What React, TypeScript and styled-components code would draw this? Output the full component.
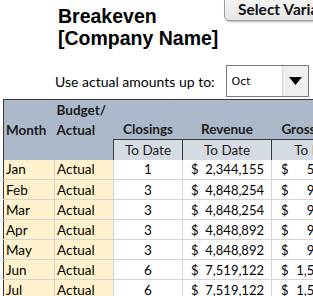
import styled, { createGlobalStyle } from "styled-components";

const GlobalStyle = createGlobalStyle`
  html, body {
    margin: 0;
    padding: 0;
    background: #ffffff;
  }
  body {
    font-family: Lato, "Open Sans", sans-serif;
    color: #000;
  }
`;

const Page = styled.div`
  width: 313px;
  height: 296px;
  overflow: hidden;
  background: #ffffff;
`;

const Top = styled.div`
  height: 99px;
  display: flex;
  flex-direction: column;
`;

const TitleRow = styled.div`
  display: flex;
  align-items: flex-start;
  gap: 10px;
  padding-left: 58px;
  height: 60px;
`;

const Title = styled.h1`
  width: 156px;
  flex-shrink: 0;
  margin: 5px 0 0;
  font-family: "Liberation Sans", Arial, sans-serif;
  font-weight: bold;
  font-size: 19.5px;
  line-height: 22px;
  color: #000;
  white-space: nowrap;
`;

const MacroButton = styled.button`
  flex-shrink: 0;
  margin-top: -6px;
  height: 27px;
  width: 130px;
  padding: 2px 0 0 13px;
  text-align: left;
  font-family: Lato, sans-serif;
  font-weight: bold;
  font-size: 15.5px;
  color: #111;
  white-space: nowrap;
  background: linear-gradient(#f7f7f7, #e6e6e6);
  border: 1px solid #9c9c9c;
  border-radius: 5px;
  box-shadow: 1px 1px 2px rgba(0, 0, 0, 0.3);
`;

const ControlRow = styled.div`
  display: flex;
  align-items: center;
  gap: 11px;
  padding-left: 55px;
  margin-top: 5px;
`;

const Label = styled.span`
  font-size: 14px;
  color: #000;
  white-space: nowrap;
`;

const Dropdown = styled.div`
  width: 81px;
  height: 30px;
  display: flex;
  border: 1px solid #7a7a7a;
  background: #fff;
`;

const DropValue = styled.span`
  flex: 1;
  display: flex;
  align-items: center;
  padding-left: 5px;
  font-family: "DejaVu Sans", sans-serif;
  font-size: 11px;
  color: #000;
`;

const DropArrow = styled.span`
  width: 25px;
  display: flex;
  align-items: center;
  justify-content: center;
  background: #efefef;
  border-left: 1px solid #d4d4d4;
`;

const Sheet = styled.table`
  margin-left: 3px;
  border-collapse: collapse;
  table-layout: fixed;
  width: 359px;
  font-size: 13.5px;
  border-top: 1px solid #3a3a3a;
  border-left: 1px solid #3a3a3a;
`;

const HeadCell = styled.th<{ $tone?: "dark" | "light"; $align?: string }>`
  height: 20px;
  padding: 0 2px;
  box-sizing: border-box;
  font-weight: bold;
  color: #1b1b1b;
  white-space: nowrap;
  text-align: ${({ $align }) => $align ?? "center"};
  background: ${({ $tone }) => ($tone === "light" ? "#d6dce4" : "#acb9ca")};
  ${({ $tone }) =>
    $tone === "light" &&
    "font-weight: normal; border-top: 1px solid #3a3a3a; border-left: 1px solid #3a3a3a;"}
`;

const Cell = styled.td<{ $beige?: boolean; $align?: string }>`
  height: 20px;
  padding: 0 2px;
  box-sizing: border-box;
  white-space: nowrap;
  overflow: hidden;
  text-align: ${({ $align }) => $align ?? "left"};
  background: ${({ $beige }) => ($beige ? "#fff2cc" : "#ffffff")};
  border-right: 1px solid #d4d4d4;
  border-bottom: 1px solid #d4d4d4;
`;

const Money = styled.div<{ $left: number }>`
  display: flex;
  justify-content: space-between;
  font-size: 13px;
  padding: 0 5px 0 ${({ $left }) => $left}px;
`;

const ROWS = [
  { month: "Jan", closings: 1, revenue: "2,344,155", gross: "515,714" },
  { month: "Feb", closings: 3, revenue: "4,848,254", gross: "969,651" },
  { month: "Mar", closings: 3, revenue: "4,848,254", gross: "969,651" },
  { month: "Apr", closings: 3, revenue: "4,848,892", gross: "969,778" },
  { month: "May", closings: 3, revenue: "4,848,892", gross: "969,778" },
  { month: "Jun", closings: 6, revenue: "7,519,122", gross: "1,503,824" },
  { month: "Jul", closings: 6, revenue: "7,519,122", gross: "1,503,824" },
];

export default function App() {
  return (
    <Page>
      <GlobalStyle />
      <Top>
        <TitleRow>
          <Title>
            Breakeven
            <br />
            [Company Name]
          </Title>
          <MacroButton>Select Variables</MacroButton>
        </TitleRow>
        <ControlRow>
          <Label>Use actual amounts up to:</Label>
          <Dropdown>
            <DropValue>Oct</DropValue>
            <DropArrow>
              <svg width="13" height="8" viewBox="0 0 13 8">
                <path d="M0 0 H13 L6.5 8 Z" fill="#000" />
              </svg>
            </DropArrow>
          </Dropdown>
        </ControlRow>
      </Top>

      <Sheet>
        <colgroup>
          <col style={{ width: 51 }} />
          <col style={{ width: 59 }} />
          <col style={{ width: 69 }} />
          <col style={{ width: 89 }} />
          <col style={{ width: 91 }} />
        </colgroup>
        <thead>
          <tr>
            <HeadCell />
            <HeadCell $align="left">Budget/</HeadCell>
            <HeadCell />
            <HeadCell />
            <HeadCell />
          </tr>
          <tr>
            <HeadCell $align="left">Month</HeadCell>
            <HeadCell $align="left">Actual</HeadCell>
            <HeadCell>Closings</HeadCell>
            <HeadCell>Revenue</HeadCell>
            <HeadCell>Gross Profit</HeadCell>
          </tr>
          <tr>
            <HeadCell />
            <HeadCell />
            <HeadCell $tone="light">To Date</HeadCell>
            <HeadCell $tone="light">To Date</HeadCell>
            <HeadCell $tone="light">To Date</HeadCell>
          </tr>
        </thead>
        <tbody>
          {ROWS.map((row) => (
            <tr key={row.month}>
              <Cell $beige>{row.month}</Cell>
              <Cell $beige>Actual</Cell>
              <Cell $align="center">{row.closings}</Cell>
              <Cell>
                <Money $left={6}>
                  <span>$</span>
                  <span>{row.revenue}</span>
                </Money>
              </Cell>
              <Cell>
                <Money $left={7}>
                  <span>$</span>
                  <span>{row.gross}</span>
                </Money>
              </Cell>
            </tr>
          ))}
        </tbody>
      </Sheet>
    </Page>
  );
}
